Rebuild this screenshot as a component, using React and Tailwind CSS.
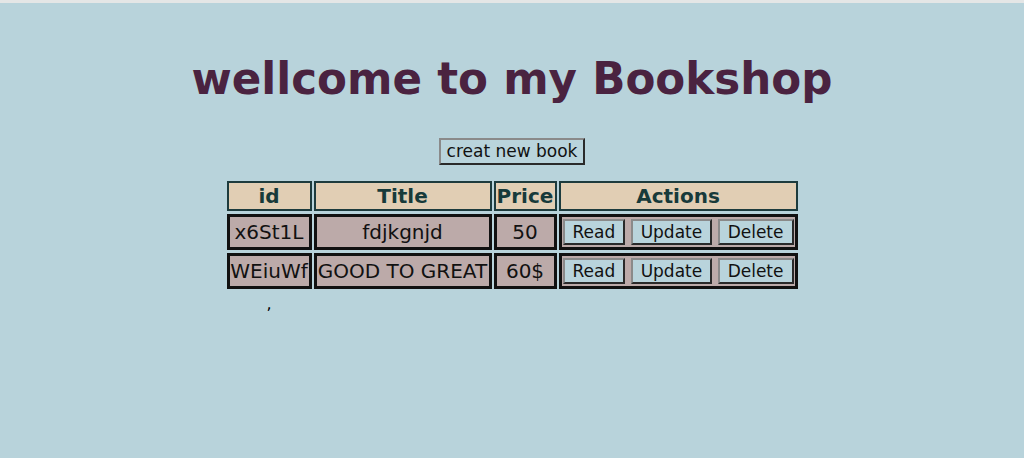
import React from "react";

const books = [
  { id: "x6St1L", title: "fdjkgnjd", price: "50" },
  { id: "WEiuWf", title: "GOOD TO GREAT", price: "60$" },
];

const btn =
  "bg-[#b9d4dc] border-2 border-t-[#8a8a8a] border-l-[#8a8a8a] border-r-[#2a2a2a] border-b-[#2a2a2a] px-[8px] h-[26px] text-[17px] leading-none text-[#111]";

const App = () => {
  return (
    <div
      className="min-h-[458px] bg-[#b8d3db] border-t-[3px] border-[#e4e6e6]"
      style={{ fontFamily: '"DejaVu Sans", sans-serif' }}
    >
      {/* Header */}
      <h1 className="text-center text-[43.6px] font-bold text-[#4a2340] pt-[48px] leading-[56px]">
        wellcome to my Bookshop
      </h1>

      <div className="flex justify-center mt-[31px]">
        <button className="bg-[#b9d4dc] border-2 border-t-[#8a8a8a] border-l-[#8a8a8a] border-r-[#2a2a2a] border-b-[#2a2a2a] px-[6px] h-[27px] text-[17px] leading-none text-[#111]">
          creat new book
        </button>
      </div>

      {/* Books table */}
      <table className="mx-auto mt-[13px] border-separate border-spacing-x-[2px] border-spacing-y-[3px] text-[20px]">
        <thead>
          <tr className="bg-[#e1ceb4] text-[#173a3a] font-bold leading-[26px]">
            <th className="border-2 border-[#1d3b3d] h-[30px] p-0 w-[85px]">id</th>
            <th className="border-2 border-[#1d3b3d] p-0 w-[178px]">Title</th>
            <th className="border-2 border-[#1d3b3d] p-0 w-[63px]">Price</th>
            <th className="border-2 border-[#1d3b3d] p-0 w-[239px]">Actions</th>
          </tr>
        </thead>
        <tbody>
          {books.map((b) => (
            <tr key={b.id} className="bg-[#bcaaa9] text-[#111]">
              <td className="border-[3px] border-[#111] h-[35px] text-center p-0">{b.id}</td>
              <td className="border-[3px] border-[#111] text-center p-0 whitespace-nowrap">{b.title}</td>
              <td className="border-[3px] border-[#111] text-center p-0">{b.price}</td>
              <td className="border-[3px] border-[#111] px-[1px] py-0">
                <div className="flex justify-between">
                  <button className={btn}>Read</button>
                  <button className={btn}>Update</button>
                  <button className={btn}>Delete</button>
                </div>
              </td>
            </tr>
          ))}
          <tr>
            <td className="text-center text-[16px] pt-0">,</td>
          </tr>
        </tbody>
      </table>
    </div>
  );
};

export default App;
